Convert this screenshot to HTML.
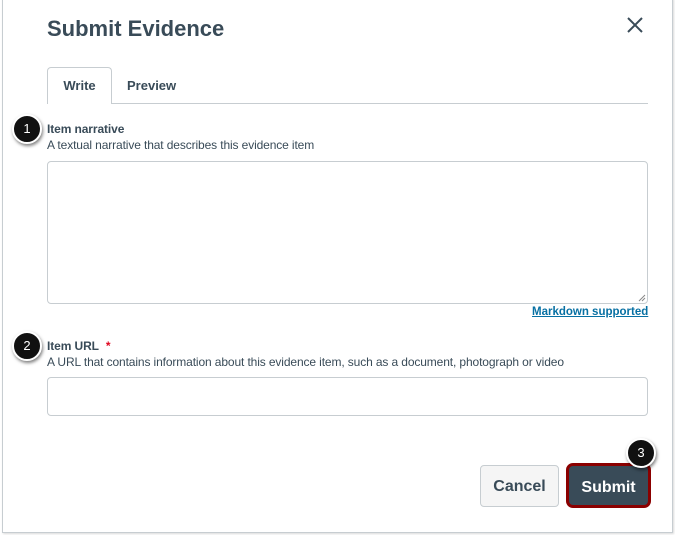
<!DOCTYPE html>
<html><head><style>
*{box-sizing:border-box;margin:0;padding:0}
body{width:675px;height:535px;background:#fff;font-family:"Liberation Sans",sans-serif;position:relative;overflow:hidden;color:#2d3b45}
.dlg{position:absolute;left:2px;top:-2px;width:671px;height:535px;border:1px solid #c7cdd1;background:#fff;box-shadow:1px 1px 2px rgba(0,0,0,.15)}
.abs{position:absolute}
h1{position:absolute;left:47px;top:16px;font-size:22px;font-weight:bold;color:#394b58}
.x{position:absolute;left:625px;top:15px}
.tabline{position:absolute;left:47px;top:103px;width:601px;height:1px;background:#c7cdd1}
.tab{position:absolute;left:47px;top:67px;width:65px;height:37px;border:1px solid #c7cdd1;border-bottom:none;border-radius:4px 4px 0 0;background:#fff;font-size:13px;font-weight:bold;text-align:center;line-height:36px;color:#394b58}
.tab2{position:absolute;left:127px;top:78px;font-size:13px;font-weight:bold;color:#394b58}
.lbl{position:absolute;left:47px;font-size:12px;font-weight:bold;color:#394b58;letter-spacing:-0.1px}
.desc{position:absolute;left:47px;font-size:12px;color:#394b58;letter-spacing:-0.12px}
.box{position:absolute;left:47px;width:601px;border:1px solid #c7cdd1;border-radius:4px;background:#fff}
.num{position:absolute;width:30px;height:30px;border-radius:50%;background:#111;border:2px solid #fff;color:#fff;font-size:13px;text-align:center;line-height:26px;box-shadow:1px 2px 3px rgba(0,0,0,.5)}
.md{position:absolute;left:532px;top:306px;font-size:11.5px;font-weight:bold;color:#0770a3;text-decoration:underline;letter-spacing:0px}
.cancel{position:absolute;left:480px;top:465px;width:79px;height:42px;border:1px solid #c7cdd1;border-radius:4px;background:#f5f5f5;font-size:16px;font-weight:bold;text-align:center;line-height:42px;color:#394b58}
.submit{position:absolute;left:566px;top:463px;width:85px;height:45px;border:3px solid #8b0000;border-radius:7px;background:#394b58;color:#fff;font-size:16px;font-weight:bold;text-align:center;line-height:43px}
</style></head><body>
<div class="dlg"></div>
<h1>Submit Evidence</h1>
<svg class="x" width="20" height="20" viewBox="0 0 20 20"><path d="M3 3L17 17M17 3L3 17" stroke="#394b58" stroke-width="2"/></svg>
<div class="tabline"></div>
<div class="tab">Write</div>
<div class="tab2">Preview</div>
<div class="lbl" style="top:122px">Item narrative</div>
<div class="desc" style="top:138px">A textual narrative that describes this evidence item</div>
<div class="box" style="top:161px;height:143px"></div>
<svg class="abs" style="left:638px;top:294px" width="8" height="8"><path d="M1 7L7 1M4 7L7 4" stroke="#888" stroke-width="1"/></svg>
<div class="md">Markdown supported</div>
<div class="lbl" style="top:339px">Item URL <span style="color:#e0061f;margin-left:4px">*</span></div>
<div class="desc" style="top:355px">A URL that contains information about this evidence item, such as a document, photograph or video</div>
<div class="box" style="top:377px;height:39px"></div>
<div class="cancel">Cancel</div>
<div class="submit">Submit</div>
<div class="num" style="left:12px;top:114px">1</div>
<div class="num" style="left:12px;top:331px">2</div>
<div class="num" style="left:626px;top:438px">3</div>
</body></html>
